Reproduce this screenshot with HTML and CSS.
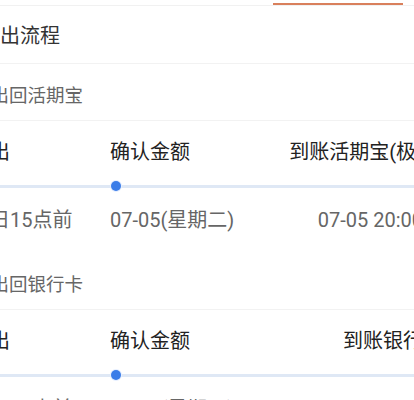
FILE: index.html
```html
<!DOCTYPE html>
<html lang="zh-CN">
<head>
<meta charset="utf-8">
<link rel="stylesheet" href="styles.css">
</head>
<body>
<div class="page">
  <div class="tabbar"><span class="tab-indicator"></span></div>
  <div class="title">转出流程</div>

  <div class="section-head">转出回活期宝</div>
  <div class="steps">
    <div class="row labels">
      <span class="c1">转出</span>
      <span class="c2">确认金额</span>
      <span class="c3">到账活期宝(极速)</span>
    </div>
    <div class="row track">
      <span class="c1"></span>
      <span class="c2"><i class="dot"></i></span>
      <span class="c3"></span>
    </div>
    <div class="row dates">
      <span class="c1">今日15点前</span>
      <span class="c2">07-05(星期二)</span>
      <span class="c3">07-05 20:00前</span>
    </div>
  </div>

  <div class="section-head">转出回银行卡</div>
  <div class="steps">
    <div class="row labels">
      <span class="c1">转出</span>
      <span class="c2">确认金额</span>
      <span class="c3">到账银行卡</span>
    </div>
    <div class="row track">
      <span class="c1"></span>
      <span class="c2"><i class="dot"></i></span>
      <span class="c3"></span>
    </div>
    <div class="row dates">
      <span class="c1">今日15点前</span>
      <span class="c2">07-05(星期二)</span>
      <span class="c3">07-05 24:00前</span>
    </div>
  </div>
</div>
</body>
</html>
```
FILE: styles.css
```css
html, body {
  margin: 0;
  padding: 0;
  background: #fff;
}
body {
  width: 414px;
  height: 400px;
  overflow: hidden;
  font-family: Roboto, "Noto Sans CJK SC", sans-serif;
}
.page {
  width: 414px;
}
.tabbar {
  height: 6px;
  border-bottom: 1px solid #f1f1f1;
  padding-left: 273px;
  padding-top: 3px;
  box-sizing: border-box;
}
.tab-indicator {
  display: block;
  width: 130px;
  height: 2px;
  background: #d9805c;
}
.title {
  height: 58px;
  box-sizing: border-box;
  padding-top: 3px;
  line-height: 55px;
  font-size: 20px;
  color: #333;
  text-indent: -20px;
  white-space: nowrap;
  border-bottom: 1px solid #f2f2f2;
}
.section-head {
  height: 57px;
  box-sizing: border-box;
  padding-top: 7px;
  line-height: 50px;
  font-size: 18.5px;
  color: #666;
  text-indent: -28px;
  white-space: nowrap;
  border-bottom: 1px solid #f2f2f2;
}
.steps {
  padding: 17px 0 19px;
  margin-left: -30px;
  width: 473px;
}
.row {
  display: grid;
  grid-template-columns: 140px 1fr auto;
  white-space: nowrap;
}
.c3 {
  text-align: right;
}
.labels {
  font-size: 20px;
  line-height: 28px;
  color: #222;
}
.track {
  height: 12px;
  margin-top: 14px;
  align-items: center;
  background: linear-gradient(#dfe8f5, #dfe8f5) 0 50% / 100% 3px no-repeat;
}
.track span {
  display: flex;
  align-items: center;
  height: 12px;
}
.dot {
  display: block;
  width: 10px;
  height: 10px;
  margin-left: 1px;
  border-radius: 50%;
  background: #3b7de8;
  box-shadow: 0 0 0 1px #e6efff;
}
.dates {
  margin-top: 14px;
  font-size: 20px;
  line-height: 28px;
  color: #666;
}
```
